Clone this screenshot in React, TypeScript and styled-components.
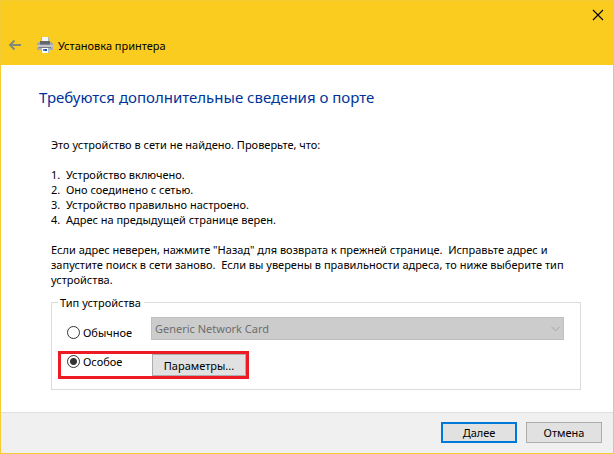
import React, { useState } from "react";
import styled, { createGlobalStyle } from "styled-components";

const GlobalStyle = createGlobalStyle`
  *, *::before, *::after { box-sizing: border-box; }
  body { margin: 0; }
  body, button, select, input {
    font-family: "Noto Sans", "Open Sans", sans-serif;
    font-size: 11px;
    line-height: 15px;
    color: #000;
  }
`;

const Window = styled.div`
  display: flex;
  flex-direction: column;
  min-height: 100vh;
  border: 1px solid #f5cd32;
  background: #fff;
`;

const Header = styled.header`
  background: #fbcc20;
  height: 64px;
`;

const CaptionBar = styled.div`
  display: flex;
  justify-content: flex-end;
  height: 30px;
  padding-right: 1px;
`;

const IconButton = styled.button`
  display: flex;
  align-items: center;
  justify-content: center;
  width: 28px;
  height: 28px;
  padding: 0;
  border: 0;
  background: transparent;
`;

const TitleRow = styled.div`
  display: flex;
  align-items: center;
  height: 28px;
`;

const Title = styled.h1`
  margin: 0 0 0 5px;
  font-size: 11px;
  font-weight: 400;
`;

const PrinterSlot = styled.span`
  display: flex;
  margin-left: 8px;
`;

const Content = styled.main`
  flex: 1;
  padding: 20px 32px 16px 50px;
`;

const Heading = styled.h2`
  margin: 0 0 28px -12px;
  font-size: 15px;
  line-height: 24px;
  font-weight: 400;
  color: #003399;
`;

const Paragraph = styled.p`
  margin: 0 0 15px;
  white-space: pre-wrap;
`;

const Steps = styled.ol`
  margin: 0 0 15px;
  padding: 0;
  list-style: none;
`;

const Step = styled.li`
  display: grid;
  grid-template-columns: 15px 1fr;
`;

const Group = styled.fieldset`
  min-width: 0;
  margin: -7px 0 0;
  padding: 4px 16px 10px 6px;
  border: 1px solid #dcdcdc;
`;

const Legend = styled.legend`
  padding: 0 3px 0 2px;
`;

const OptionRow = styled.div`
  display: grid;
  grid-template-columns: 93px minmax(0, 1fr);
  align-items: end;
  padding: 3px 0;
`;

const MarkedRow = styled(OptionRow)`
  grid-template-columns: 91px 94px;
  align-items: start;
  width: max-content;
  margin-top: 8px;
  padding: 0;
  border: 3px solid #ed1c24;
`;

const RadioLabel = styled.label<{ $inset: number }>`
  display: flex;
  align-items: center;
  gap: 3px;
  padding-left: ${(p) => p.$inset}px;
`;

const Radio = styled.input`
  appearance: none;
  flex: none;
  width: 13px;
  height: 13px;
  margin: 0;
  border: 1px solid #333;
  border-radius: 50%;
  background: #fff;

  &:checked {
    background: radial-gradient(circle, #333 3px, #fff 4px);
  }
`;

const SelectBox = styled.div`
  display: grid;
  align-items: center;

  > * { grid-area: 1 / 1; }
  > svg { justify-self: end; margin-right: 4px; pointer-events: none; }
`;

const Select = styled.select`
  appearance: none;
  width: 100%;
  height: 23px;
  padding: 0 20px 0 3px;
  border: 1px solid #bfbfbf;
  border-radius: 0;
  background: #ccc;
  color: #6d6d6d;
  opacity: 1;
`;

const Button = styled.button<{ $primary?: boolean }>`
  min-width: 76px;
  height: 21px;
  padding: 0;
  border: ${(p) => (p.$primary ? "2px solid #0078d7" : "1px solid #adadad")};
  background: #e1e1e1;
`;

const ParamsButton = styled(Button)`
  height: 22px;
`;

const Footer = styled.footer`
  display: flex;
  justify-content: flex-end;
  gap: 9px;
  padding: 9px 11px 10px;
  border-top: 1px solid #dfdfdf;
  background: #f0f0f0;
`;

const BackArrow = () => (
  <svg width="14" height="12" viewBox="0 0 14 12" fill="none" stroke="#848976" strokeWidth="2">
    <path d="M13 6H2M6.5 1.5L2 6l4.5 4.5" />
  </svg>
);

const CloseMark = () => (
  <svg width="12" height="12" viewBox="0 0 12 12" stroke="#000" strokeWidth="1.1">
    <path d="M1 1l10 10M11 1L1 11" />
  </svg>
);

const Printer = () => (
  <svg width="16" height="16" viewBox="0 0 16 16" shapeRendering="crispEdges">
    <path fill="#b3b4a8" d="M4 0h8v5H4z" />
    <path fill="#f4f6f8" d="M5 0h6v5H5z" />
    <path fill="#a9abad" d="M1 5h14v1h1v7H0V6h1z" />
    <path fill="#c3c5c8" d="M0 8h16v2H0z" />
    <path fill="#64676b" d="M3 4h10v4H3z" />
    <path fill="#85888b" d="M3 7h10v1H3z" />
    <path fill="#797c80" d="M2 10h12v1H2z" />
    <path fill="#a9bacb" d="M4 11h8v5H4z" />
    <path fill="#fff" d="M5 11h6v5H5z" />
    <path fill="#3686c8" d="M6 12h2v2H6z" />
    <path fill="#1c4f91" d="M8 12h2v2H8z" />
  </svg>
);

const Chevron = () => (
  <svg width="9" height="6" viewBox="0 0 9 6" fill="none" stroke="#a3a3a3">
    <path d="M.5 .8l4 4 4-4" />
  </svg>
);

const steps = [
  "Устройство включено.",
  "Оно соединено с сетью.",
  "Устройство правильно настроено.",
  "Адрес на предыдущей странице верен.",
];

export default function App() {
  const [kind, setKind] = useState("custom");

  return (
    <>
      <GlobalStyle />
      <Window>
        <Header>
          <CaptionBar>
            <IconButton aria-label="Закрыть"><CloseMark /></IconButton>
          </CaptionBar>
          <TitleRow>
            <IconButton aria-label="Назад"><BackArrow /></IconButton>
            <PrinterSlot><Printer /></PrinterSlot>
            <Title>Установка принтера</Title>
          </TitleRow>
        </Header>
        <Content>
          <Heading>Требуются дополнительные сведения о порте</Heading>
          <Paragraph>Это устройство в сети не найдено. Проверьте, что:</Paragraph>
          <Steps>
            {steps.map((text, i) => (
              <Step key={text}>
                <span>{i + 1}.</span>
                <span>{text}</span>
              </Step>
            ))}
          </Steps>
          <Paragraph>
            {'Если адрес неверен, нажмите "Назад" для возврата к прежней странице.  Исправьте адрес и\n'}
            {"запустите поиск в сети заново.  Если вы уверены в правильности адреса, то ниже выберите тип\n"}
            {"устройства."}
          </Paragraph>
          <Group>
            <Legend>Тип устройства</Legend>
            <OptionRow>
              <RadioLabel $inset={9}>
                <Radio type="radio" name="kind" checked={kind === "standard"} onChange={() => setKind("standard")} />
                Обычное
              </RadioLabel>
              <SelectBox>
                <Select aria-label="Тип устройства" disabled={kind !== "standard"}>
                  <option>Generic Network Card</option>
                </Select>
                <Chevron />
              </SelectBox>
            </OptionRow>
            <MarkedRow>
              <RadioLabel $inset={6}>
                <Radio type="radio" name="kind" checked={kind === "custom"} onChange={() => setKind("custom")} />
                Особое
              </RadioLabel>
              <ParamsButton type="button">Параметры...</ParamsButton>
            </MarkedRow>
          </Group>
        </Content>
        <Footer>
          <Button type="button" $primary>Далее</Button>
          <Button type="button">Отмена</Button>
        </Footer>
      </Window>
    </>
  );
}
